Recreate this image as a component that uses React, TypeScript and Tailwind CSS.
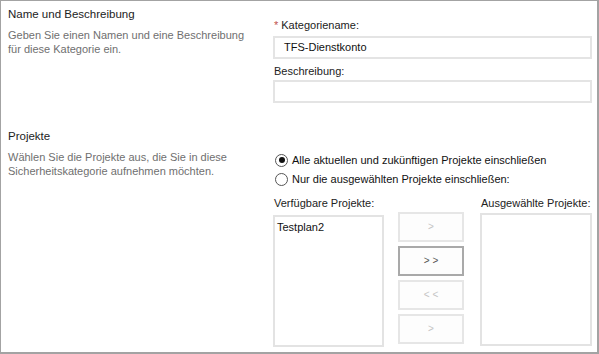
import React from 'react';

function Radio({ checked }: { checked?: boolean }) {
  return (
    <span className="w-[13px] h-[13px] rounded-full border border-[#555] bg-white flex items-center justify-center shrink-0">
      {checked && <span className="w-[6px] h-[6px] rounded-full bg-[#111]" />}
    </span>
  );
}

function MoveButton({ label, active }: { label: string; active?: boolean }) {
  return (
    <button
      className={
        'w-[66px] h-[30px] border-2 flex items-center justify-center text-[10px] leading-none ' +
        (active ? 'border-[#a9a9a9] bg-[#fdfdfd] text-[#555]' : 'border-[#e6e6e6] bg-[#fdfdfd] text-[#c4c4c4]')
      }
    >
      {label}
    </button>
  );
}

export default function App() {
  return (
    <div
      className="w-[599px] h-[354px] bg-white border border-[#a3a3a3] border-r-2 border-b-2 text-[11px] text-[#333] overflow-hidden whitespace-nowrap"
      style={{ fontFamily: '"Liberation Sans", Arial, sans-serif' }}
    >
      {/* Name und Beschreibung */}
      <div className="flex">
        <div className="w-[272px] pl-[7px] pt-[5px]">
          <div className="text-[11.5px] leading-[16px] text-[#222]">Name und Beschreibung</div>
          <p className="mt-[6px] text-[#6f6f6f] leading-[14px]">
            Geben Sie einen Namen und eine Beschreibung
            <br />
            für diese Kategorie ein.
          </p>
        </div>
        <div className="w-[319px] pt-[16px]">
          <div className="leading-[16px] text-[#222] pl-[1px]">
            <span className="text-[#c0504d] mr-[3px]">*</span>Kategoriename:
          </div>
          <div className="mt-[3px] h-[23px] border-2 border-[#e4e4e4] flex items-center pl-[9px] text-[#111]">
            TFS-Dienstkonto
          </div>
          <div className="mt-[4px] leading-[16px] text-[#222] pl-[1px]">Beschreibung:</div>
          <div className="mt-[1px] h-[23px] border-2 border-[#e4e4e4]" />
        </div>
      </div>

      {/* Projekte */}
      <div className="flex mt-[25px]">
        <div className="w-[272px] pl-[7px]">
          <div className="text-[11.5px] leading-[16px] text-[#222]">Projekte</div>
          <p className="mt-[6px] text-[#6f6f6f] leading-[14px]">
            Wählen Sie die Projekte aus, die Sie in diese
            <br />
            Sicherheitskategorie aufnehmen möchten.
          </p>
        </div>
        <div className="w-[319px] pt-[24px]">
          <label className="flex items-center gap-[4px] pl-[2px] h-[16px] text-[#111]">
            <Radio checked />
            Alle aktuellen und zukünftigen Projekte einschließen
          </label>
          <label className="flex items-center gap-[4px] pl-[2px] h-[16px] mt-[3px] text-[#111]">
            <Radio />
            Nur die ausgewählten Projekte einschließen:
          </label>
          <div className="flex mt-[8px]">
            <div className="w-[111px] flex flex-col">
              <div className="leading-[16px] text-[#222] pl-[1px]">Verfügbare Projekte:</div>
              <div className="mt-[4px] h-[132px] border-2 border-[#e3e3e3] pl-[2px] pt-[2px] text-[#111]">
                Testplan2
              </div>
            </div>
            <div className="w-[96px] flex flex-col gap-[4px] pt-[17px] pl-[14px] items-start">
              <MoveButton label=">" />
              <MoveButton label="> >" active />
              <MoveButton label="< <" />
              <MoveButton label=">" />
            </div>
            <div className="w-[112px] flex flex-col">
              <div className="leading-[16px] text-[#222] pl-[1px]">Ausgewählte Projekte:</div>
              <div className="mt-[2px] h-[133px] border-2 border-[#e3e3e3]" />
            </div>
          </div>
        </div>
      </div>
    </div>
  );
}
